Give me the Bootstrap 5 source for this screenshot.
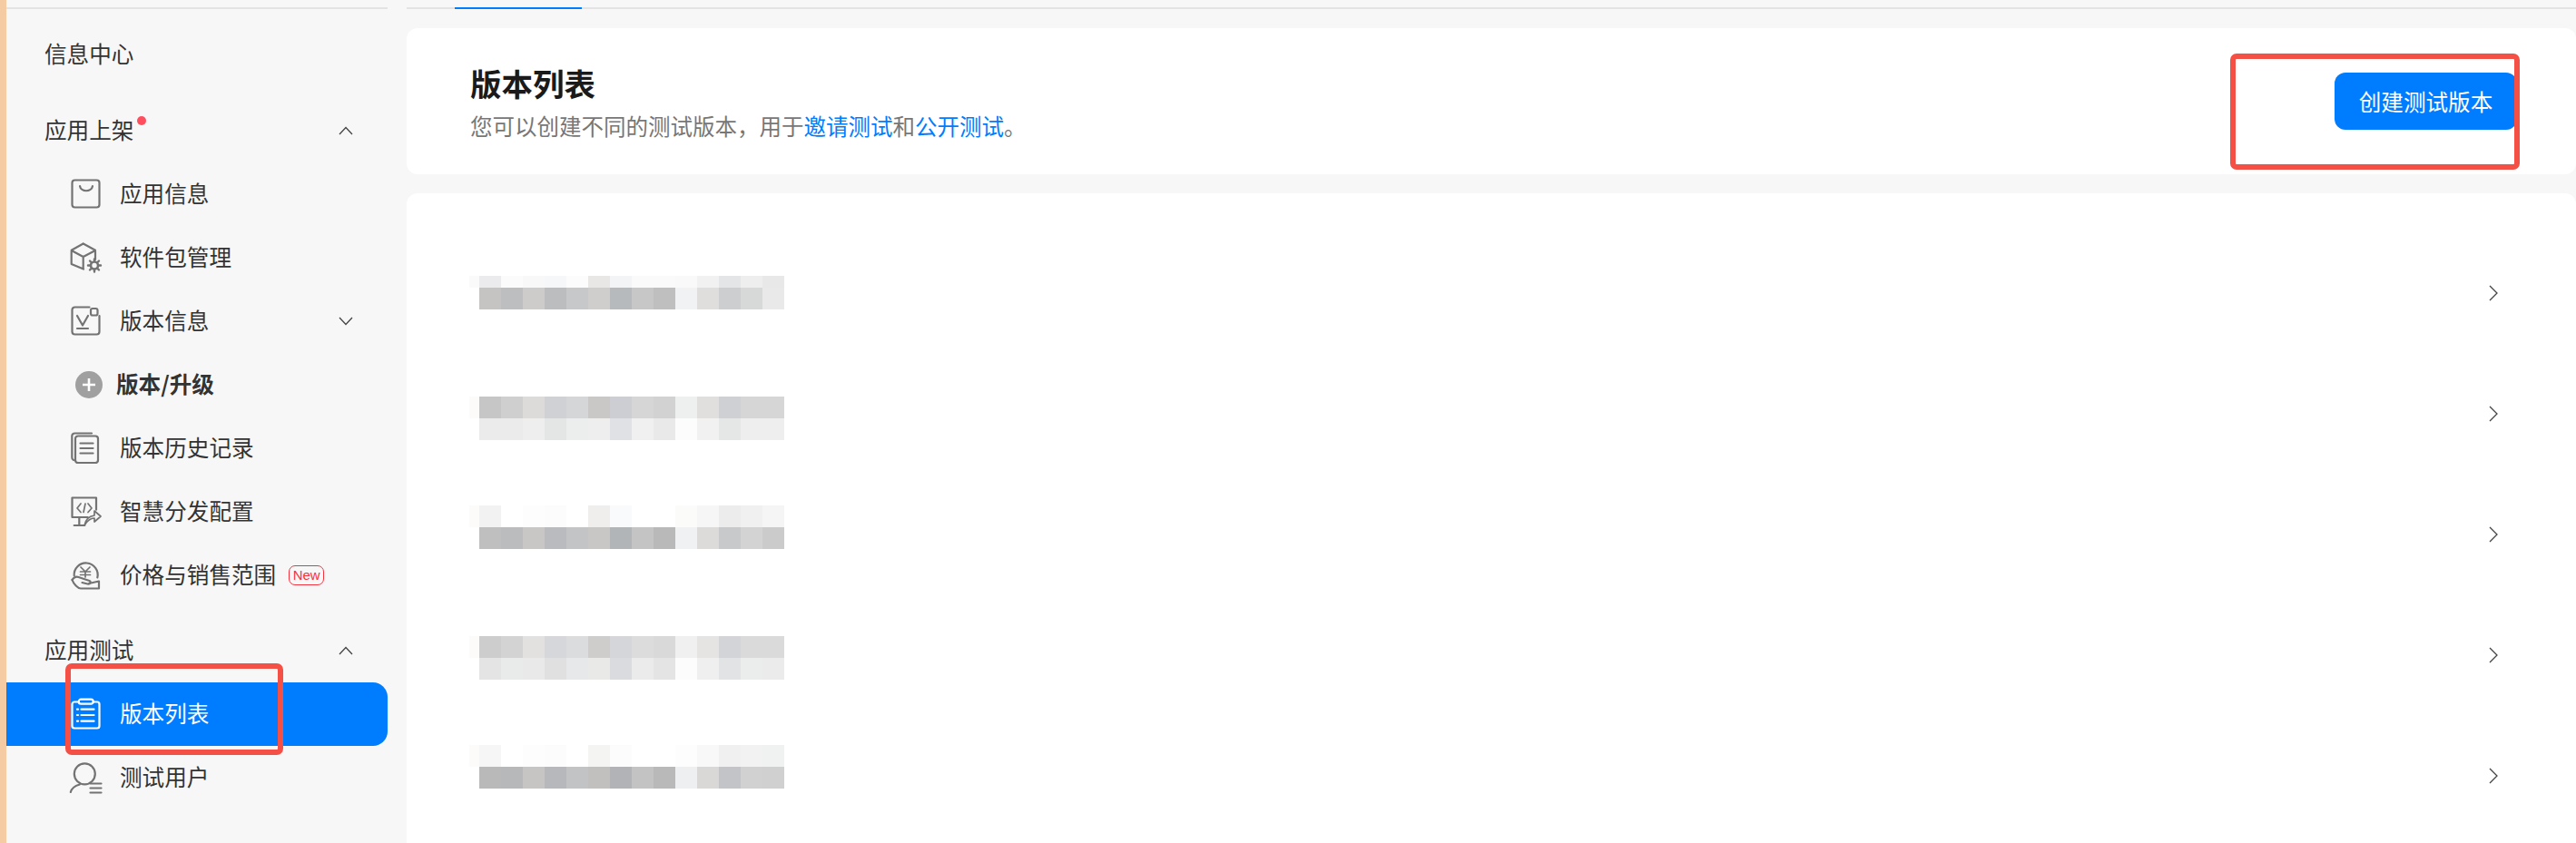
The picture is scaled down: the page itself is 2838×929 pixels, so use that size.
<!DOCTYPE html>
<html lang="zh-CN">
<head>
<meta charset="utf-8">
<title>版本列表</title>
<link href="https://cdn.jsdelivr.net/npm/bootstrap@5.3.0/dist/css/bootstrap.min.css" rel="stylesheet">
<style>
html,body{height:929px;overflow:hidden}
body{background:#f7f7f7;font-family:"Liberation Sans","Noto Sans CJK SC",sans-serif;color:#333}
.cjk{font-family:"Noto Sans CJK SC","Liberation Sans",sans-serif}
.shot{height:929px;overflow:hidden}
.edge-strip{width:7px;background:#f5cba3;flex:none}
.side-col{width:420px;flex:none;margin-top:8px;border-top:2px solid #e3e3e3}
.main-col{margin-left:21px;margin-top:8px;min-width:0}
.tab-rule{height:2px;background:#e3e3e3;padding-left:53px}
.tab-rule span{display:block;width:140px;height:2px;background:#007dff}
.menu-first{margin-top:15px}
.menu-second{margin-top:14px}
.menu-third{margin-top:13px}
.menu-row{height:70px;padding:0 0 3px;color:#333;font-size:24.6px;line-height:1}
.menu-row:hover,.menu-row:focus{color:#333}
.head-row{padding-left:42px;padding-right:38px}
.item-row{padding-left:71px;padding-right:38px}
.item-row svg.ico{width:34px;height:34px;flex:none;margin:3px 21px 0 -1px;overflow:visible;fill:none;stroke:#737373;stroke-width:2.2;stroke-linecap:round;stroke-linejoin:round}
.item-row.is-active{background:#007dff;color:#fff;border-radius:0 16px 16px 0}
.item-row.is-active:hover,.item-row.is-active:focus{color:#fff}
.item-row.is-active svg.ico{stroke:#fff}
.sub-row{padding-left:76px;font-weight:700}
.sub-row svg{width:30px;height:30px;flex:none;margin:3px 15px 0 0}
.red-dot{width:10px;height:10px;background:#ff4f5e;border-radius:50%;margin-left:4px;margin-top:-20px}
.chev{width:16px;height:10px;margin:3px 0 0 auto;flex:none}
.new-tag{width:39px;height:22px;margin:3px 0 0 14px;border:1px solid #f5333f;border-radius:7px;color:#f5333f;font-size:15px;font-family:"Liberation Sans",sans-serif;line-height:19px;text-align:center}
.white-panel{background:#fff;border:0;border-radius:12px}
.head-panel{margin-top:21px;height:161px;padding:0 65px 0 70px}
.head-text{margin-top:3px}
.page-title{font-size:34.5px;line-height:40px;font-weight:700;color:#1a1a1a;margin:0}
.page-desc{font-size:24.5px;line-height:32px;color:#777;margin:12px 0 0}
.page-desc a{color:#007dff;text-decoration:none}
.create-btn{background:#007dff;border:0;border-radius:12px;color:#fff;font-size:24.6px;line-height:1;height:63px;width:201px;padding:0}
.create-btn:hover{background:#007dff;color:#fff}
.list-panel{margin-top:21px;height:720px;padding-top:43px;border-radius:12px 12px 0 0}
.ver-row{height:133px;padding-left:69px;padding-right:86px}
.ver-row svg.mosaic{width:350px;height:133px;display:block;shape-rendering:crispEdges}
.ver-row svg.go{width:10px;height:18px}
.note-box{position:absolute;border:6px solid #f55045;border-radius:7px;pointer-events:none}
.note-menu{left:72px;top:731px;width:240px;height:101px}
.note-btn{left:2457px;top:59px;width:319px;height:128px}
</style>
</head>
<body>
<div class="shot d-flex position-relative cjk">
  <div class="edge-strip"></div>

  <aside class="side-col">
    <nav class="nav flex-column">
      <div class="menu-first">
        <a class="nav-link menu-row head-row d-flex align-items-center" href="#">信息中心</a>
      </div>
      <div class="menu-second">
        <a class="nav-link menu-row head-row d-flex align-items-center" href="#">应用上架<span class="red-dot"></span>
          <svg class="chev" viewBox="0 0 16 10"><path d="M1 9 8 1.500 15 9" fill="none" stroke="#444" stroke-width="1.300"/></svg></a>
        <a class="nav-link menu-row item-row d-flex align-items-center" href="#">
          <svg class="ico" viewBox="0 0 34 34"><rect x="2.500" y="1.500" width="30" height="30" rx="3"/><path d="M11 8c1 7 13 7 14 0"/></svg>应用信息</a>
        <a class="nav-link menu-row item-row d-flex align-items-center" href="#">
          <svg class="ico" viewBox="0 0 34 34"><path d="M14.700 1.500 28 8.700V19M14.700 1.500 1.700 8.700V24l13.300 5.500M1.700 9l13 7L28 9M14.700 16v13"/><circle cx="27" cy="25.500" r="4" stroke-width="2.600"/><path d="M27 18.500v2M27 30.500v2M20 25.500h2M32 25.500h2M22 20.500l1.500 1.500M30.500 29l1.500 1.500M32 20.500 30.500 22M23.500 29 22 30.500" stroke-width="2.400"/></svg>软件包管理</a>
        <a class="nav-link menu-row item-row d-flex align-items-center" href="#">
          <svg class="ico" viewBox="0 0 34 34"><path d="M21.500 1.500H5.500a3 3 0 0 0-3 3v24a3 3 0 0 0 3 3h24a3 3 0 0 0 3-3V11"/><rect x="23" y="3" width="7.500" height="7.500" rx="2"/><path d="M8 11l6 10.500L20 11M8 25h12"/></svg>版本信息
          <svg class="chev" viewBox="0 0 16 10"><path d="M1 1l7 7.500L15 1" fill="none" stroke="#444" stroke-width="1.300"/></svg></a>
        <a class="nav-link menu-row sub-row d-flex align-items-center" href="#">
          <svg viewBox="0 0 30 30"><circle cx="15" cy="15" r="15" fill="#a0a0a0"/><path d="M15 8v14M8 15h14" stroke="#fff" stroke-width="2.600"/></svg>版本/升级</a>
        <a class="nav-link menu-row item-row d-flex align-items-center" href="#">
          <svg class="ico" viewBox="0 0 34 34"><path d="M4 30a3 3 0 0 1-1.700-3V3.500a3 3 0 0 1 3-3H24"/><rect x="6" y="3.500" width="25" height="29.500" rx="3"/><path d="M11.500 11.500h14M11.500 17h14M11.500 22.500h14"/></svg>版本历史记录</a>
        <a class="nav-link menu-row item-row d-flex align-items-center" href="#">
          <svg class="ico" viewBox="0 0 34 34"><path d="M29 14.700V1.500H2.500V23H19.700M10.300 23v9M4.700 32h11.600"/><path d="M12 8l-4 5 4 4.500M20 8l4 5-4 4.500M17 8l-2 9.500" stroke-width="1.700"/><path d="M16 32c1-6 5-10 11-11v-5l7 6-7 6v-4c-4 0-8 3-11 8z" stroke-width="1.700"/></svg>智慧分发配置</a>
        <a class="nav-link menu-row item-row d-flex align-items-center" href="#">
          <svg class="ico" viewBox="0 0 34 34"><path d="M4.700 17.500A13 13 0 1 1 30.300 19.500"/><path d="M12 8l5 5 5-5M11.500 13h11M11.500 16.500h11M17 13v6" stroke-width="1.700"/><path d="M2.500 22c2-3 4-4 7-3l12 4c2 1 1 4-2 3.500l-6-1.500"/><path d="M21 26l11-2.500v8H12c-3 0-8-5-9.500-9.500"/></svg>价格与销售范围<span class="new-tag">New</span></a>
      </div>
      <div class="menu-third">
        <a class="nav-link menu-row head-row d-flex align-items-center" href="#">应用测试
          <svg class="chev" viewBox="0 0 16 10"><path d="M1 9 8 1.500 15 9" fill="none" stroke="#444" stroke-width="1.300"/></svg></a>
        <a class="nav-link menu-row item-row is-active d-flex align-items-center" href="#">
          <svg class="ico" viewBox="0 0 34 34"><path d="M9.700 3.500H5a2.500 2.500 0 0 0-2.500 2.500v24a2.500 2.500 0 0 0 2.500 2.500h25a2.500 2.500 0 0 0 2.500-2.500V6A2.500 2.500 0 0 0 30 3.500h-4.300"/><rect x="9.700" y=".7" width="16" height="5" rx="2.500"/><path d="M12.500 11.700h14M12.500 18h14M12.500 24.700h14M8 11.700h1M8 18h1M8 24.700h1"/></svg>版本列表</a>
        <a class="nav-link menu-row item-row d-flex align-items-center" href="#">
          <svg class="ico" viewBox="0 0 34 34" stroke-width="2.500"><circle cx="16.300" cy="12.800" r="11.500"/><path d="M.8 33c1-4 5-7 10-8.500"/><path d="M22.500 23.500h12M22.500 28.500h12M22.500 33.500h12"/></svg>测试用户</a>
      </div>
    </nav>
  </aside>

  <main class="main-col flex-grow-1">
    <div class="tab-rule"><span></span></div>
    <section class="white-panel head-panel d-flex justify-content-between align-items-center">
      <div class="head-text">
        <h1 class="page-title">版本列表</h1>
        <p class="page-desc">您可以创建不同的测试版本，用于<a href="#">邀请测试</a>和<a href="#">公开测试</a>。</p>
      </div>
      <button type="button" class="btn create-btn cjk">创建测试版本</button>
    </section>
    <section class="white-panel list-panel">
      <div class="ver-row d-flex justify-content-between align-items-center">
        <svg class="mosaic" viewBox="0 0 350 133"><g transform="translate(0 48)"><rect width="11" height="13" fill="#fbfafa"/><rect x="11" width="24" height="13" fill="#ebebed"/><rect x="35" width="24" height="13" fill="#fbfbfb"/><rect x="59" width="24" height="13" fill="#f8f8f8"/><rect x="83" width="24" height="13" fill="#f6f7f8"/><rect x="107" width="24" height="13" fill="#fcfcfc"/><rect x="131" width="24" height="13" fill="#e8e7e6"/><rect x="155" width="24" height="13" fill="#f3f4f6"/><rect x="179" width="24" height="13" fill="#fafafa"/><rect x="203" width="24" height="13" fill="#fafafa"/><rect x="227" width="24" height="13" fill="#f9f9f9"/><rect x="251" width="24" height="13" fill="#f1f1f1"/><rect x="275" width="24" height="13" fill="#e4e5e7"/><rect x="299" width="24" height="13" fill="#eeeeee"/><rect x="323" width="24" height="13" fill="#e8e8e8"/></g><g transform="translate(0 61)"><rect x="11" width="24" height="24" fill="#c5c4c3"/><rect x="35" width="24" height="24" fill="#bdbec0"/><rect x="59" width="24" height="24" fill="#cdccca"/><rect x="83" width="24" height="24" fill="#bcbdbf"/><rect x="107" width="24" height="24" fill="#c7c8ca"/><rect x="131" width="24" height="24" fill="#cfcecc"/><rect x="155" width="24" height="24" fill="#b6babd"/><rect x="179" width="24" height="24" fill="#c7c7c7"/><rect x="203" width="24" height="24" fill="#bfbfbf"/><rect x="227" width="24" height="24" fill="#f1f2f4"/><rect x="251" width="24" height="24" fill="#dfdedc"/><rect x="275" width="24" height="24" fill="#cdced0"/><rect x="299" width="24" height="24" fill="#d7d9d9"/><rect x="323" width="24" height="24" fill="#e9e9e9"/></g></svg>
        <svg class="go" viewBox="0 0 10 18"><path d="M1 1l8 8-8 8" fill="none" stroke="#444" stroke-width="1.300"/></svg>
      </div>
      <div class="ver-row d-flex justify-content-between align-items-center">
        <svg class="mosaic" viewBox="0 0 350 133"><g transform="translate(0 48)"><rect width="11" height="24" fill="#fcfbfa"/><rect x="11" width="24" height="24" fill="#c6c6c6"/><rect x="35" width="24" height="24" fill="#cfcfcf"/><rect x="59" width="24" height="24" fill="#dcdbd9"/><rect x="83" width="24" height="24" fill="#d0d1d4"/><rect x="107" width="24" height="24" fill="#d5d6d8"/><rect x="131" width="24" height="24" fill="#c9c8c6"/><rect x="155" width="24" height="24" fill="#cdced3"/><rect x="179" width="24" height="24" fill="#d6d6d6"/><rect x="203" width="24" height="24" fill="#d2d2d2"/><rect x="227" width="24" height="24" fill="#eef0ef"/><rect x="251" width="24" height="24" fill="#e0dfdd"/><rect x="275" width="24" height="24" fill="#ced0d3"/><rect x="299" width="24" height="24" fill="#d6d6d6"/><rect x="323" width="24" height="24" fill="#d6d6d6"/></g><g transform="translate(0 72)"><rect x="11" width="24" height="24" fill="#ebebeb"/><rect x="35" width="24" height="24" fill="#ebebeb"/><rect x="59" width="24" height="24" fill="#eeeeee"/><rect x="83" width="24" height="24" fill="#e4e6e5"/><rect x="107" width="24" height="24" fill="#eceeed"/><rect x="131" width="24" height="24" fill="#eeeeee"/><rect x="155" width="24" height="24" fill="#e0e1e4"/><rect x="179" width="24" height="24" fill="#f0f0f0"/><rect x="203" width="24" height="24" fill="#e9e9e9"/><rect x="227" width="24" height="24" fill="#fbfcfb"/><rect x="251" width="24" height="24" fill="#f1f1f1"/><rect x="275" width="24" height="24" fill="#e5e7e6"/><rect x="299" width="24" height="24" fill="#eeeeee"/><rect x="323" width="24" height="24" fill="#eeeeee"/></g></svg>
        <svg class="go" viewBox="0 0 10 18"><path d="M1 1l8 8-8 8" fill="none" stroke="#444" stroke-width="1.300"/></svg>
      </div>
      <div class="ver-row d-flex justify-content-between align-items-center">
        <svg class="mosaic" viewBox="0 0 350 133"><g transform="translate(0 35)"><rect width="11" height="24" fill="#fcfbfa"/><rect x="11" width="24" height="24" fill="#f2f2f2"/><rect x="35" width="24" height="24" fill="#ffffff"/><rect x="59" width="24" height="24" fill="#fdfdfd"/><rect x="83" width="24" height="24" fill="#fcfcfc"/><rect x="107" width="24" height="24" fill="#ffffff"/><rect x="131" width="24" height="24" fill="#efeeec"/><rect x="155" width="24" height="24" fill="#f9fafc"/><rect x="179" width="24" height="24" fill="#ffffff"/><rect x="203" width="24" height="24" fill="#ffffff"/><rect x="227" width="24" height="24" fill="#fbfbf9"/><rect x="251" width="24" height="24" fill="#f6f6f6"/><rect x="275" width="24" height="24" fill="#ececec"/><rect x="299" width="24" height="24" fill="#f0f0f0"/><rect x="323" width="24" height="24" fill="#f5f5f5"/></g><g transform="translate(0 59)"><rect x="11" width="24" height="24" fill="#bfbfbf"/><rect x="35" width="24" height="24" fill="#bbbcbe"/><rect x="59" width="24" height="24" fill="#c8c7c5"/><rect x="83" width="24" height="24" fill="#b9bbbe"/><rect x="107" width="24" height="24" fill="#c3c4c6"/><rect x="131" width="24" height="24" fill="#c8c7c5"/><rect x="155" width="24" height="24" fill="#b1b5b8"/><rect x="179" width="24" height="24" fill="#c4c4c4"/><rect x="203" width="24" height="24" fill="#b9b9b9"/><rect x="227" width="24" height="24" fill="#f0f1f3"/><rect x="251" width="24" height="24" fill="#dcdbd9"/><rect x="275" width="24" height="24" fill="#c8c9cb"/><rect x="299" width="24" height="24" fill="#d3d3d3"/><rect x="323" width="24" height="24" fill="#cbcbcb"/></g></svg>
        <svg class="go" viewBox="0 0 10 18"><path d="M1 1l8 8-8 8" fill="none" stroke="#444" stroke-width="1.300"/></svg>
      </div>
      <div class="ver-row d-flex justify-content-between align-items-center">
        <svg class="mosaic" viewBox="0 0 350 133"><g transform="translate(0 46)"><rect width="11" height="24" fill="#fcfbfa"/><rect x="11" width="24" height="24" fill="#cdcdcd"/><rect x="35" width="24" height="24" fill="#d3d3d3"/><rect x="59" width="24" height="24" fill="#e2e1df"/><rect x="83" width="24" height="24" fill="#d5d7da"/><rect x="107" width="24" height="24" fill="#dbdcde"/><rect x="131" width="24" height="24" fill="#cecdcb"/><rect x="155" width="24" height="24" fill="#d4d6da"/><rect x="179" width="24" height="24" fill="#dcdcdc"/><rect x="203" width="24" height="24" fill="#d9d9d9"/><rect x="227" width="24" height="24" fill="#f0f0f0"/><rect x="251" width="24" height="24" fill="#e5e4e2"/><rect x="275" width="24" height="24" fill="#d2d4d7"/><rect x="299" width="24" height="24" fill="#dadada"/><rect x="323" width="24" height="24" fill="#dadada"/></g><g transform="translate(0 70)"><rect x="11" width="24" height="24" fill="#e4e4e4"/><rect x="35" width="24" height="24" fill="#e9ebea"/><rect x="59" width="24" height="24" fill="#e8e9e8"/><rect x="83" width="24" height="24" fill="#e0e0e0"/><rect x="107" width="24" height="24" fill="#e6e8ea"/><rect x="131" width="24" height="24" fill="#e9eae7"/><rect x="155" width="24" height="24" fill="#d9dbde"/><rect x="179" width="24" height="24" fill="#ebebeb"/><rect x="203" width="24" height="24" fill="#e4e4e4"/><rect x="227" width="24" height="24" fill="#fcfcfc"/><rect x="251" width="24" height="24" fill="#efefef"/><rect x="275" width="24" height="24" fill="#e1e3e5"/><rect x="299" width="24" height="24" fill="#ebedec"/><rect x="323" width="24" height="24" fill="#ebebeb"/></g></svg>
        <svg class="go" viewBox="0 0 10 18"><path d="M1 1l8 8-8 8" fill="none" stroke="#444" stroke-width="1.300"/></svg>
      </div>
      <div class="ver-row d-flex justify-content-between align-items-center">
        <svg class="mosaic" viewBox="0 0 350 133"><g transform="translate(0 33)"><rect width="11" height="24" fill="#fcfbf9"/><rect x="11" width="24" height="24" fill="#f6f6f6"/><rect x="35" width="24" height="24" fill="#ffffff"/><rect x="59" width="24" height="24" fill="#fdfdfd"/><rect x="83" width="24" height="24" fill="#fcfcfc"/><rect x="107" width="24" height="24" fill="#ffffff"/><rect x="131" width="24" height="24" fill="#f4f4f2"/><rect x="155" width="24" height="24" fill="#fcfcfc"/><rect x="179" width="24" height="24" fill="#ffffff"/><rect x="203" width="24" height="24" fill="#ffffff"/><rect x="227" width="24" height="24" fill="#fdfdfd"/><rect x="251" width="24" height="24" fill="#f8f8f8"/><rect x="275" width="24" height="24" fill="#f0f0f0"/><rect x="299" width="24" height="24" fill="#f2f2f2"/><rect x="323" width="24" height="24" fill="#f0f2f1"/></g><g transform="translate(0 57)"><rect x="11" width="24" height="24" fill="#b9b9b9"/><rect x="35" width="24" height="24" fill="#b7b8ba"/><rect x="59" width="24" height="24" fill="#c6c5c3"/><rect x="83" width="24" height="24" fill="#b7b8bc"/><rect x="107" width="24" height="24" fill="#c2c3c5"/><rect x="131" width="24" height="24" fill="#c1c0be"/><rect x="155" width="24" height="24" fill="#b2b3b7"/><rect x="179" width="24" height="24" fill="#c3c3c3"/><rect x="203" width="24" height="24" fill="#b9b9b9"/><rect x="227" width="24" height="24" fill="#eeeff1"/><rect x="251" width="24" height="24" fill="#d9d8d6"/><rect x="275" width="24" height="24" fill="#c3c4c8"/><rect x="299" width="24" height="24" fill="#d1d1d1"/><rect x="323" width="24" height="24" fill="#d0d0d0"/></g></svg>
        <svg class="go" viewBox="0 0 10 18"><path d="M1 1l8 8-8 8" fill="none" stroke="#444" stroke-width="1.300"/></svg>
      </div>
    </section>
  </main>

  <div class="note-box note-menu"></div>
  <div class="note-box note-btn"></div>
</div>
<script src="https://cdn.jsdelivr.net/npm/bootstrap@5.3.0/dist/js/bootstrap.bundle.min.js"></script>
</body>
</html>
